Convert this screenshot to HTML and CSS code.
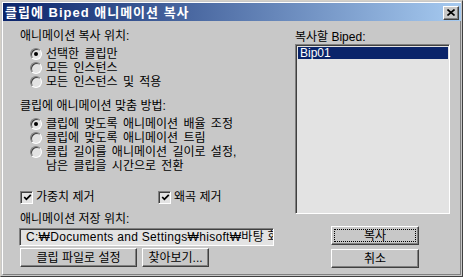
FILE: index.html
```html
<!DOCTYPE html>
<html lang="ko">
<head>
    <meta charset="UTF-8">
    <title>클립에 Biped 애니메이션 복사</title>
    <link rel="stylesheet" href="styles.css">
</head>
<body>
    <div class="window">
        <div class="titlebar">
            <span class="title">클립에 Biped 애니메이션 복사</span>
            <button class="close">
                <svg width="8" height="7" viewBox="0 0 8 7"><path d="M0.5 0.5 L7.5 6.5 M7.5 0.5 L0.5 6.5" stroke="#000" stroke-width="1.6"/></svg>
            </button>
        </div>
        <div class="content">
            <div class="left">
                <div class="label first">애니메이션 복사 위치:</div>
                <div class="options">
                    <div class="opt"><span class="radio on"></span>선택한 클립만</div>
                    <div class="opt"><span class="radio"></span>모든 인스턴스</div>
                    <div class="opt"><span class="radio"></span>모든 인스턴스 및 적용</div>
                </div>
                <div class="label sec">클립에 애니메이션 맞춤 방법:</div>
                <div class="options">
                    <div class="opt"><span class="radio on"></span>클립에 맞도록 애니메이션 배율 조정</div>
                    <div class="opt"><span class="radio"></span>클립에 맞도록 애니메이션 트림</div>
                    <div class="opt"><span class="radio"></span>클립 길이를 애니메이션 길이로 설정,</div>
                    <div class="opt cont">남은 클립을 시간으로 전환</div>
                </div>
                <div class="checks">
                    <div class="chk wide"><span class="box"><svg width="9" height="9" viewBox="0 0 9 9"><path d="M1.2 4 L3.4 6.3 L7.8 1.8" fill="none" stroke="#000" stroke-width="1.8"/></svg></span>가중치 제거</div>
                    <div class="chk"><span class="box"><svg width="9" height="9" viewBox="0 0 9 9"><path d="M1.2 4 L3.4 6.3 L7.8 1.8" fill="none" stroke="#000" stroke-width="1.8"/></svg></span>왜곡 제거</div>
                </div>
                <div class="label save">애니메이션 저장 위치:</div>
                <div class="field">C:₩Documents and Settings₩hisoft₩바탕 화면</div>
                <div class="btnrow">
                    <button class="btn clipfile">클립 파일로 설정</button>
                    <button class="btn browse">찾아보기...</button>
                </div>
            </div>
            <div class="right">
                <div class="label rlabel">복사할 Biped:</div>
                <div class="listbox">
                    <div class="item sel">Bip01</div>
                </div>
                <button class="btn action focus">복사</button>
                <button class="btn action cancel">취소</button>
            </div>
        </div>
    </div>
</body>
</html>
```

FILE: styles.css
```css
*{
    margin: 0;
    padding: 0;
    box-sizing: border-box;
}
body{
    background: #c8c8c8;
    font-family: "Liberation Sans", "Noto Sans CJK KR", sans-serif;
    font-size: 12px;
    color: #000;
}
.window{
    width: 463px;
    height: 277px;
    background: #c8c8c8;
    border: 1px solid;
    border-color: #d4d0c8 #404040 #404040 #d4d0c8;
    display: flex;
    flex-direction: column;
}
.titlebar{
    margin: 1px 1px 0 1px;
    border-top: 1px solid #fff;
    border-left: 1px solid #fff;
    height: 19px;
    background: linear-gradient(to right, #0a246a, #a6caf0);
    display: flex;
    align-items: center;
    justify-content: space-between;
    padding: 0 2px 0 2px;
}
.title{
    color: #fff;
    font-weight: bold;
    font-size: 13px;
    letter-spacing: 1px;
    line-height: 18px;
    margin-top: 1px;
}
.close{
    width: 16px;
    height: 14px;
    background: #c8c8c8;
    border: 1px solid;
    border-color: #fff #404040 #404040 #fff;
    box-shadow: inset -1px -1px #808080;
    display: flex;
    align-items: center;
    justify-content: center;
    margin-top: 1px;
}
.content{
    flex: 1;
    display: flex;
    padding-left: 17px;
    border-left: 1px solid #fff;
    margin-left: 1px;
    border-right: 1px solid #808080;
    margin-right: 1px;
    border-bottom: 1px solid #808080;
    margin-bottom: 1px;
}
.left{
    width: 254px;
    display: flex;
    flex-direction: column;
}
.label{
    line-height: 14px;
    white-space: nowrap;
}
.label.first{
    margin-top: 8px;
}
.label.sec{
    margin-top: 10px;
}
.label.save{
    margin-top: 8px;
}
.options{
    margin-top: 4px;
    padding-left: 10px;
}
.opt{
    height: 14px;
    line-height: 14px;
    display: flex;
    align-items: center;
    white-space: nowrap;
    word-spacing: 2px;
}
.opt.cont{
    padding-left: 16px;
}
.radio{
    width: 12px;
    height: 12px;
    border-radius: 50%;
    background: #e3e3e3;
    border: 1px solid;
    border-color: #808080 #fff #fff #808080;
    box-shadow: inset 1px 1px #404040;
    margin-right: 4px;
    position: relative;
    flex: none;
}
.radio.on::after{
    content: "";
    position: absolute;
    left: 3px;
    top: 3px;
    width: 4px;
    height: 4px;
    border-radius: 50%;
    background: #000;
}
.checks{
    margin-top: 17px;
    display: flex;
    height: 14px;
}
.chk{
    display: flex;
    align-items: center;
    line-height: 14px;
    white-space: nowrap;
}
.chk.wide{
    width: 138px;
}
.box{
    width: 13px;
    height: 13px;
    background: #e3e3e3;
    border: 1px solid;
    border-color: #808080 #fff #fff #808080;
    box-shadow: inset 1px 1px #404040;
    display: flex;
    align-items: center;
    justify-content: center;
    padding: 1px 0 0 1px;
    margin-right: 3px;
}
.field{
    margin-top: 2px;
    margin-left: -1px;
    width: 255px;
    height: 18px;
    background: #e3e3e3;
    border: 1px solid;
    border-color: #808080 #fff #fff #808080;
    box-shadow: inset 1px 1px #404040;
    padding: 0 0 0 6px;
    line-height: 16px;
    letter-spacing: 0.3px;
    white-space: nowrap;
    overflow: hidden;
}
.btnrow{
    margin-top: 2px;
    display: flex;
    gap: 5px;
}
.btn{
    height: 19px;
    background: #c8c8c8;
    border: 1px solid;
    border-color: #fff #404040 #404040 #fff;
    box-shadow: inset -1px -1px #808080;
    font-family: inherit;
    font-size: 12px;
    line-height: 16px;
    color: #000;
}
.btn.clipfile{
    width: 117px;
}
.btn.browse{
    width: 67px;
}
.right{
    margin-left: 21px;
    width: 155px;
    display: flex;
    flex-direction: column;
}
.rlabel{
    margin-top: 9px;
}
.listbox{
    height: 170px;
    background: #e3e3e3;
    border: 1px solid;
    border-color: #808080 #fff #fff #808080;
    box-shadow: inset 1px 1px #404040;
    padding: 2px 1px 0 2px;
}
.item{
    height: 12px;
    line-height: 12px;
    padding-left: 2px;
}
.item.sel{
    background: #0a246a;
    color: #fff;
}
.btn.action{
    width: 88px;
    margin-left: 36px;
}
.btn.focus{
    margin-top: 12px;
    outline: 1px dotted #000;
    outline-offset: -4px;
}
.btn.cancel{
    margin-top: 4px;
}
```
